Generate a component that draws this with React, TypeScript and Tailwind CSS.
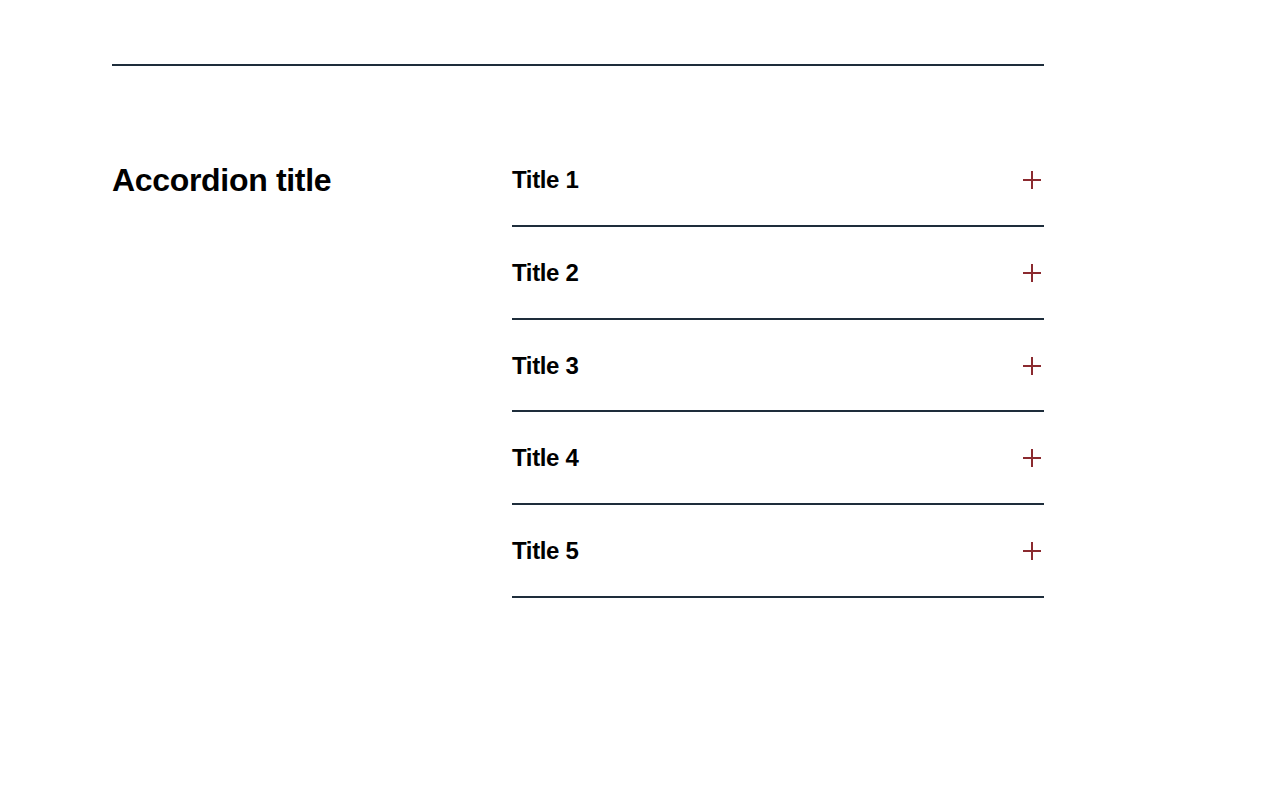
import React from "react";

const items = ["Title 1", "Title 2", "Title 3", "Title 4", "Title 5"];

function PlusIcon() {
  return (
    <svg width="24" height="24" viewBox="0 0 24 24" fill="none" className="shrink-0">
      <path d="M3 12h18M12 3v18" stroke="#8b2a2f" strokeWidth="2" />
    </svg>
  );
}

export default function App() {
  return (
    <div className="min-h-[806px] bg-white font-['Liberation_Sans',Arial,sans-serif] text-black">
      <div className="ml-[112px] w-[932px] pt-[64px]">
        <div className="border-t-2 border-[#1e2d3b]" />
        <div className="mt-[68px] flex">
          <div className="w-[400px] shrink-0 pt-[26px]">
            <h2 className="text-[32px] font-bold leading-[40px] tracking-[-0.01em]">
              Accordion title
            </h2>
          </div>
          <div className="flex-1">
            {items.map((title) => (
              <button
                key={title}
                className="flex w-full items-center justify-between border-b-2 border-[#1e2d3b] pt-[30px] pb-[28.75px] text-left"
              >
                <span className="text-[24px] font-bold leading-[32px] tracking-[-0.015em]">
                  {title}
                </span>
                <PlusIcon />
              </button>
            ))}
          </div>
        </div>
      </div>
    </div>
  );
}
